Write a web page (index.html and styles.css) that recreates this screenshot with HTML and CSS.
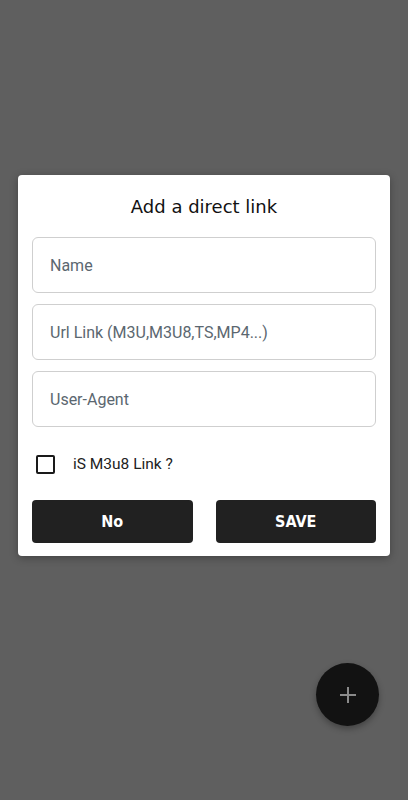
FILE: index.html
```html
<!DOCTYPE html>
<html lang="en">
<head>
  <meta charset="UTF-8">
  <meta name="viewport" content="width=device-width, initial-scale=1.0">
  <title>Add a direct link</title>
  <link rel="stylesheet" href="styles.css">
</head>
<body>
  <div class="screen">
    <div class="dialog">
      <h2 class="dialog-title">Add a direct link</h2>
      <div class="field"><input type="text" placeholder="Name"></div>
      <div class="field"><input type="text" placeholder="Url Link (M3U,M3U8,TS,MP4...)"></div>
      <div class="field"><input type="text" placeholder="User-Agent"></div>
      <label class="check-row">
        <span class="check-box"></span>
        <span class="check-label">iS M3u8 Link ?</span>
      </label>
      <div class="actions">
        <button class="btn">No</button>
        <button class="btn">SAVE</button>
      </div>
    </div>
    <button class="fab" aria-label="Add">
      <svg width="20" height="20" viewBox="0 0 20 20">
        <path d="M10 2v16M2 10h16" stroke="#8a8a8a" stroke-width="2" fill="none"/>
      </svg>
    </button>
  </div>
</body>
</html>
```

FILE: styles.css
```css
body {
  margin: 0;
  padding: 0;
  background: #5f5f5f;
  font-family: Roboto, 'Liberation Sans', sans-serif;
}

.screen {
  width: 408px;
  height: 800px;
  padding-top: 175px;
  box-sizing: border-box;
  position: relative;
}

.dialog {
  margin: 0 18px;
  background: #ffffff;
  border-radius: 4px;
  padding: 20px 14px 13px 14px;
  box-shadow: 0 2px 8px rgba(0, 0, 0, 0.3);
}

.dialog-title {
  margin: 0 0 18px 0;
  text-align: center;
  font-family: 'DejaVu Sans', sans-serif;
  font-weight: normal;
  font-size: 18px;
  line-height: 24px;
  color: #111;
}

.field {
  margin-bottom: 11px;
}

.field input {
  display: block;
  width: 100%;
  box-sizing: border-box;
  height: 56px;
  border: 1px solid #cfcfcf;
  border-radius: 6px;
  padding: 0 17px;
  font-family: Roboto, sans-serif;
  font-size: 16px;
  color: #333;
  background: #fff;
  outline: none;
}

.field input::placeholder {
  color: #5b6770;
}

.check-row {
  display: flex;
  align-items: center;
  padding-left: 4px;
  height: 52px;
  margin-bottom: 10px;
}

.check-box {
  width: 15px;
  height: 15px;
  border: 2px solid #1a1a1a;
  border-radius: 2px;
}

.check-label {
  margin-left: 18px;
  font-size: 15.5px;
  color: #222;
}

.actions {
  display: flex;
  gap: 23px;
}

.btn {
  flex: 1;
  height: 43px;
  background: #212121;
  color: #fff;
  border: none;
  border-radius: 4px;
  font-family: 'DejaVu Sans Condensed', 'DejaVu Sans', sans-serif;
  font-weight: bold;
  font-size: 16px;
}

.fab {
  position: absolute;
  left: 316px;
  top: 663px;
  width: 63px;
  height: 63px;
  border-radius: 50%;
  background: #121212;
  border: none;
  display: flex;
  align-items: center;
  justify-content: center;
  box-shadow: 0 3px 6px rgba(0, 0, 0, 0.3);
}
```
